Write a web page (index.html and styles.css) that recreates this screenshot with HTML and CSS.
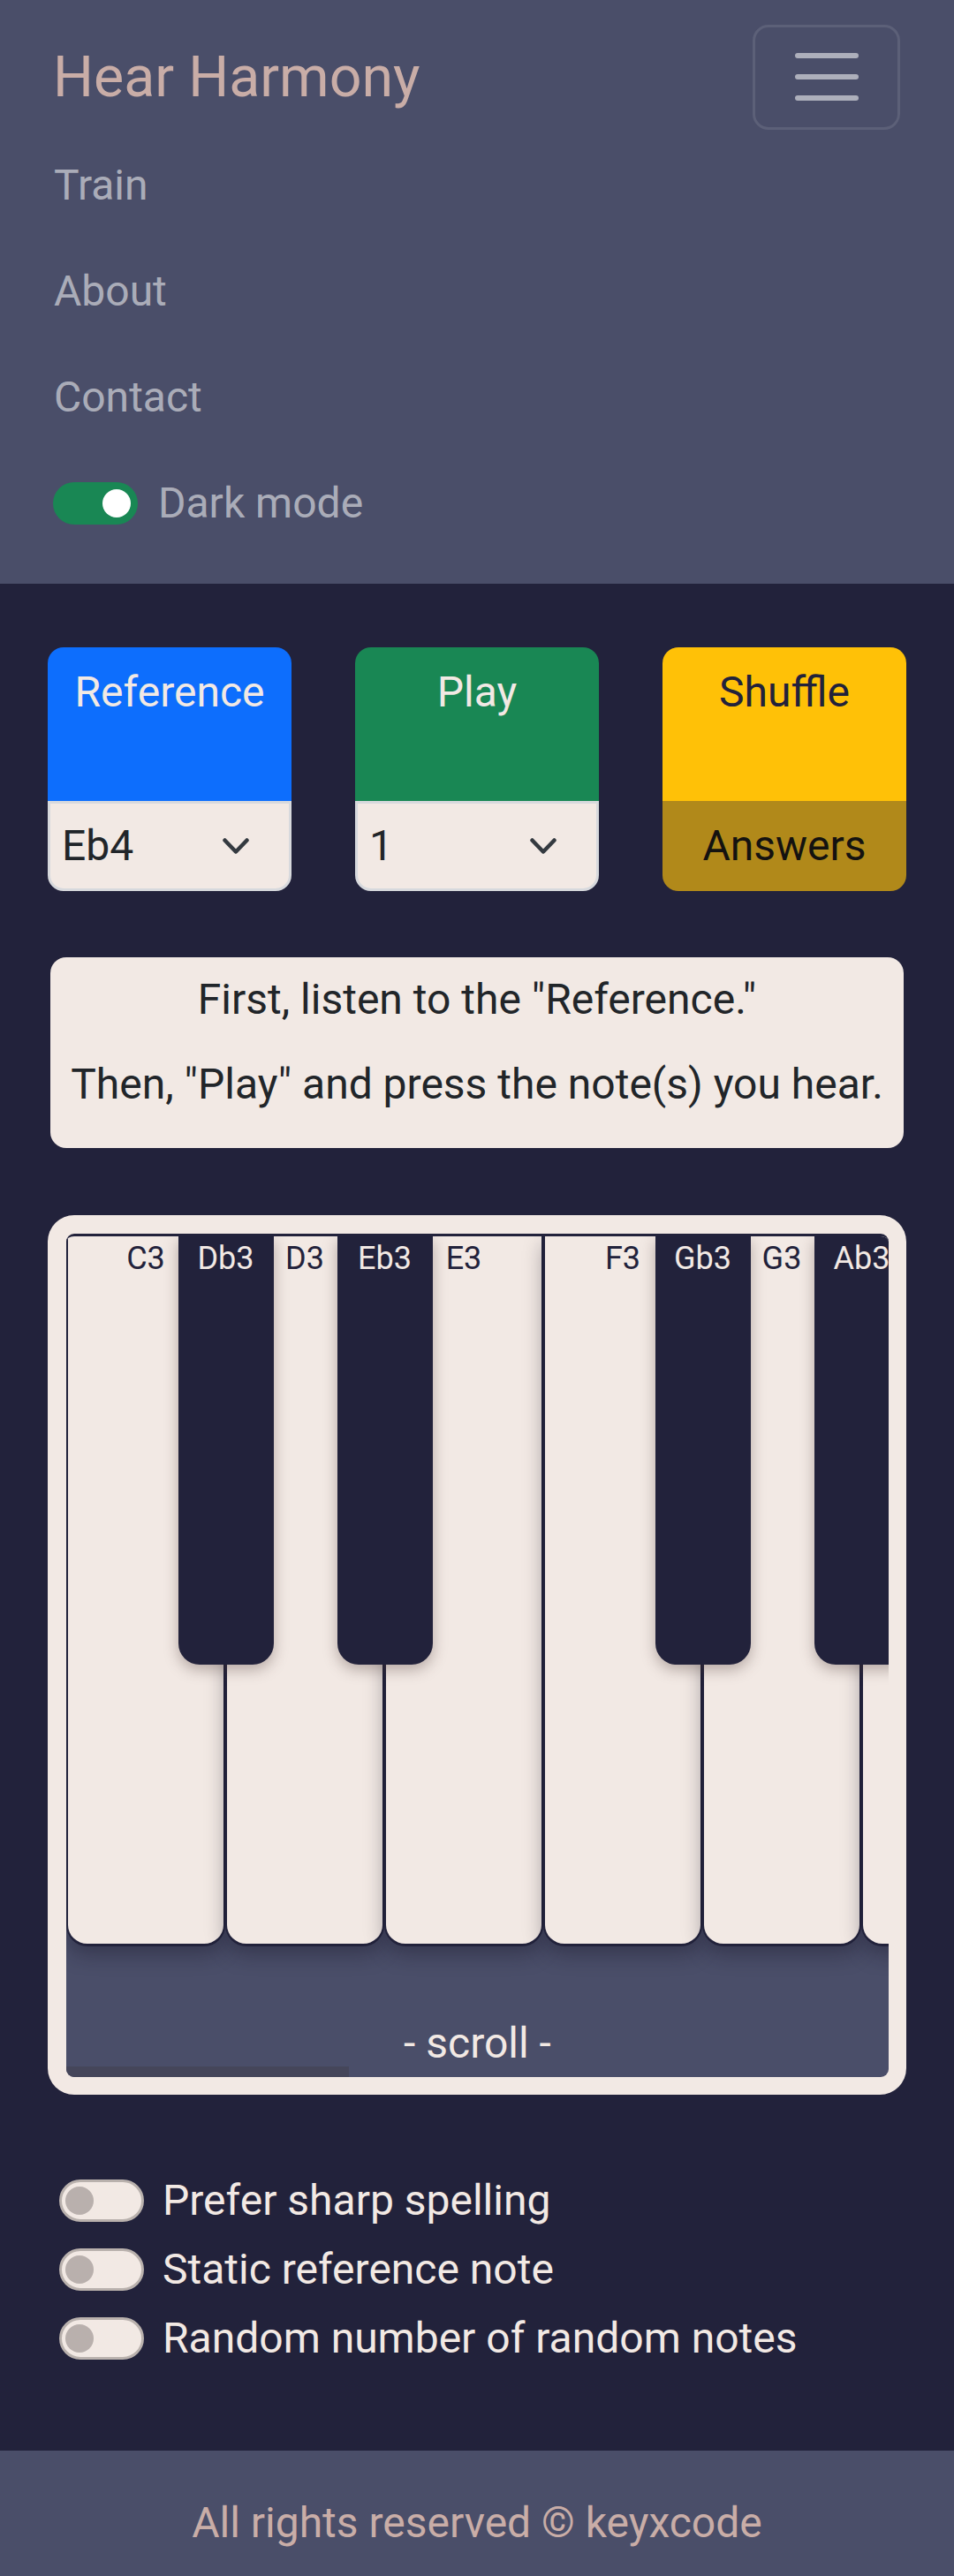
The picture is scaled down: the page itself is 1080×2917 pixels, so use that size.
FILE: index.html
```html
<!DOCTYPE html>
<html lang="en">
<head>
<meta charset="utf-8">
<title>Hear Harmony</title>
<link rel="stylesheet" href="styles.css">
</head>
<body>
<header class="navbar">
  <div class="nav-top">
    <a class="brand" href="#">Hear Harmony</a>
    <button class="toggler" aria-label="Toggle navigation">
      <svg class="toggler-icon" viewBox="0 0 30 30" width="90" height="90" aria-hidden="true"><path stroke="rgba(255,255,255,0.55)" stroke-linecap="round" stroke-miterlimit="10" stroke-width="2" d="M4 7h22M4 15h22M4 23h22"/></svg>
    </button>
  </div>
  <ul class="nav-list">
    <li><a class="nav-link" href="#">Train</a></li>
    <li><a class="nav-link" href="#">About</a></li>
    <li><a class="nav-link" href="#">Contact</a></li>
    <li class="nav-switch">
      <span class="switch switch-on"></span>
      <span class="switch-label">Dark mode</span>
    </li>
  </ul>
</header>

<main class="main">
  <section class="controls">
    <div class="control">
      <button class="control-btn btn-blue"><span class="btn-text">Reference</span></button>
      <div class="select"><span>Eb4</span><svg class="chevron" viewBox="0 0 30 18" width="30" height="18" aria-hidden="true"><polyline points="2.5,2.5 15,15.5 27.5,2.5" fill="none" stroke="#343a40" stroke-width="4.5" stroke-linecap="round" stroke-linejoin="round"/></svg></div>
    </div>
    <div class="control">
      <button class="control-btn btn-green"><span class="btn-text">Play</span></button>
      <div class="select"><span>1</span><svg class="chevron" viewBox="0 0 30 18" width="30" height="18" aria-hidden="true"><polyline points="2.5,2.5 15,15.5 27.5,2.5" fill="none" stroke="#343a40" stroke-width="4.5" stroke-linecap="round" stroke-linejoin="round"/></svg></div>
    </div>
    <div class="control">
      <button class="control-btn btn-yellow"><span class="btn-text">Shuffle</span></button>
      <button class="answers">Answers</button>
    </div>
  </section>

  <section class="instructions">
    <p>First, listen to the "Reference."</p>
    <p>Then, "Play" and press the note(s) you hear.</p>
  </section>

  <section class="piano">
    <div class="piano-inner">
      <div class="keyboard">
        <div class="white-key"><span class="key-label">C3</span><div class="black-key"><span class="key-label">Db3</span></div></div>
        <div class="white-key"><span class="key-label">D3</span><div class="black-key"><span class="key-label">Eb3</span></div></div>
        <div class="white-key"><span class="key-label">E3</span></div>
        <div class="white-key"><span class="key-label">F3</span><div class="black-key"><span class="key-label">Gb3</span></div></div>
        <div class="white-key"><span class="key-label">G3</span><div class="black-key"><span class="key-label">Ab3</span></div></div>
        <div class="white-key"></div>
      </div>
      <div class="scroll-hint">- scroll -</div>
      <div class="scrollbar"></div>
    </div>
  </section>

  <section class="options">
    <div class="option"><span class="switch switch-off"></span><span class="option-label">Prefer sharp spelling</span></div>
    <div class="option"><span class="switch switch-off"></span><span class="option-label">Static reference note</span></div>
    <div class="option"><span class="switch switch-off"></span><span class="option-label">Random number of random notes</span></div>
  </section>
</main>

<footer class="footer">All rights reserved © keyxcode</footer>
</body>
</html>
```

FILE: styles.css
```css
* { box-sizing: border-box; }

html, body {
  margin: 0;
  padding: 0;
}

body {
  font-family: Roboto, "Liberation Sans", Arial, sans-serif;
  font-size: 48px;
  line-height: 72px;
  color: #f2e9e4;
  background: #22223b;
}

/* ---------- header ---------- */
.navbar {
  background: #4a4e69;
  padding: 24px 61px 31px 61px;
}

.nav-top {
  display: flex;
  justify-content: space-between;
  align-items: center;
  height: 126px;
}

.brand {
  font-size: 64.5px;
  line-height: 126px;
  color: #c9ada7;
  text-decoration: none;
  margin-left: -1px;
}

.toggler {
  width: 167px;
  height: 119px;
  padding: 0;
  background: transparent;
  border: 3px solid rgba(255, 255, 255, 0.1);
  border-radius: 18px;
  display: flex;
  align-items: center;
  justify-content: center;
}

.toggler-icon { display: block; }

.nav-list {
  list-style: none;
  margin: 0;
  padding: 0;
}

.nav-link {
  display: block;
  padding: 24px 0;
  color: rgba(255, 255, 255, 0.55);
  text-decoration: none;
}

.nav-switch {
  display: flex;
  align-items: center;
  padding: 24px 0;
  color: rgba(255, 255, 255, 0.55);
}

.nav-switch .switch { margin-left: -1px; margin-right: 23px; }

/* ---------- switches ---------- */
.switch {
  position: relative;
  display: inline-block;
  flex: 0 0 96px;
  width: 96px;
  height: 48px;
  border-radius: 24px;
}

.switch::after {
  content: "";
  position: absolute;
  top: 50%;
  width: 32px;
  height: 32px;
  margin-top: -16px;
  border-radius: 50%;
}

.switch-on {
  background: #198754;
}

.switch-on::after {
  left: 56px;
  background: #ffffff;
}

.switch-off {
  background: #f2e9e4;
  border: 3px solid #b9b1ad;
}

.switch-off::after {
  left: 4px;
  background: #b9b0ad;
}

/* ---------- main ---------- */
.main {
  padding: 72px 54px 85px 54px;
}

.controls {
  display: flex;
  justify-content: space-between;
}

.control {
  width: 276px;
  display: flex;
  flex-direction: column;
}

.control-btn {
  display: flex;
  justify-content: center;
  align-items: flex-start;
  width: 100%;
  height: 174px;
  margin: 0;
  padding: 15px 0 0 0;
  border: 0;
  border-radius: 18px 18px 0 0;
  font: inherit;
  line-height: 72px;
  text-align: center;
}

.btn-text { display: block; }

.btn-blue { background: #0d6efd; color: #f2e9e4; }
.btn-green { background: #198754; color: #f2e9e4; }
.btn-yellow { background: #ffc107; color: #22223b; }

.select {
  height: 102px;
  display: flex;
  align-items: center;
  justify-content: space-between;
  padding: 0 45px 0 13px;
  background: #f2e9e4;
  color: #212529;
  border: 3px solid #d7d9dd;
  border-radius: 0 0 18px 18px;
}

.chevron { display: block; }

.answers {
  display: block;
  width: 100%;
  height: 102px;
  margin: 0;
  padding: 0;
  border: 0;
  border-radius: 0 0 18px 18px;
  background: #b1891a;
  color: #141210;
  font: inherit;
  line-height: 72px;
  text-align: center;
}

/* ---------- instructions ---------- */
.instructions {
  margin: 75px 3px 0 3px;
  padding: 12px;
  background: #f2e9e4;
  color: #212529;
  border-radius: 18px;
  text-align: center;
}

.instructions p {
  margin: 0 0 24px 0;
}

/* ---------- piano ---------- */
.piano {
  margin-top: 76px;
  padding: 21px 20px 20px 21px;
  background: #f2e9e4;
  border-radius: 30px;
}

.piano-inner {
  position: relative;
  overflow: hidden;
  background: #4a4e69;
  border-top: 3px solid #22223b;
  border-radius: 9px;
}

.keyboard {
  display: flex;
  height: 804px;
}

.white-key {
  position: relative;
  flex: 0 0 180px;
  height: 804px;
  background: #f2e9e4;
  border: 2.5px solid #22223b;
  border-top: 0;
  border-bottom-width: 3px;
  border-radius: 0 0 24px 24px;
  box-shadow: 0 10px 22px rgba(20, 18, 35, 0.35);
  color: #22223b;
  text-align: center;
  font-size: 36px;
  line-height: 50px;
}

.key-label {
  display: block;
  white-space: nowrap;
}

.black-key {
  position: absolute;
  top: 0;
  left: calc(100% - 51.5px);
  width: 108px;
  height: 485px;
  background: #22223b;
  border-radius: 0 0 24px 24px;
  box-shadow: 0 6px 16px rgba(70, 50, 45, 0.35);
  color: #f2e9e4;
  z-index: 2;
}

.scroll-hint {
  height: 148px;
  padding-top: 74px;
  text-align: center;
  color: #f2e9e4;
}

.scrollbar {
  position: absolute;
  left: 0;
  bottom: 0;
  width: 320px;
  height: 12px;
  background: #45465a;
  border-bottom-left-radius: 6px;
}

/* ---------- options ---------- */
.options {
  margin-top: 84px;
  padding-left: 13px;
}

.option {
  display: flex;
  align-items: center;
  height: 72px;
  margin-bottom: 6px;
}

.option .switch { margin-right: 21px; }

.option-label {
  color: #f2e9e4;
}

/* ---------- footer ---------- */
.footer {
  background: #4a4e69;
  color: #c9ada7;
  text-align: center;
  padding: 46px 0 30px 0;
}
```
